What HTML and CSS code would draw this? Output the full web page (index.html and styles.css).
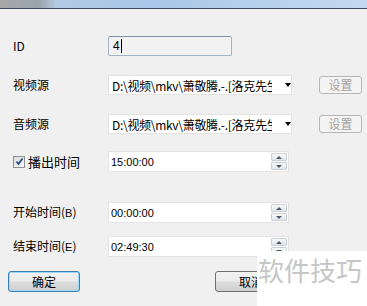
FILE: index.html
```html
<!DOCTYPE html>
<html lang="zh">
<head>
  <meta charset="UTF-8">
  <title>播出设置</title>
  <link rel="stylesheet" href="styles.css">
</head>
<body>
  <div class="titlebar"><div class="title-icon"></div></div>
  <div class="form">
    <div class="row row-id">
      <label class="lbl">ID</label>
      <div class="field field-id">4<span class="caret"></span></div>
    </div>
    <div class="row row-video">
      <label class="lbl">视频源</label>
      <div class="combo"><span class="combo-text">D:\视频\mkv\萧敬腾.-.[洛克先生</span><span class="arrow"></span></div>
      <button class="btn-set" disabled>设置</button>
    </div>
    <div class="row row-audio">
      <label class="lbl">音频源</label>
      <div class="combo"><span class="combo-text">D:\视频\mkv\萧敬腾.-.[洛克先生</span><span class="arrow"></span></div>
      <button class="btn-set" disabled>设置</button>
    </div>
    <div class="row row-play">
      <label class="lbl lbl-check"><span class="check">
        <svg width="9" height="9" viewBox="0 0 9 9"><path d="M1.5 4.5 L3.5 7 L7.5 1.5" fill="none" stroke="#2a4a8a" stroke-width="1.8"/></svg>
      </span>播出时间</label>
      <div class="spin"><span class="spin-text">15:00:00</span><span class="spin-btns"><span class="sb up"></span><span class="sb down"></span></span></div>
    </div>
    <div class="row row-start">
      <label class="lbl">开始时间(<span class="lat">B</span>)</label>
      <div class="spin"><span class="spin-text">00:00:00</span><span class="spin-btns"><span class="sb up"></span><span class="sb down"></span></span></div>
    </div>
    <div class="row row-end">
      <label class="lbl">结束时间(<span class="lat">E</span>)</label>
      <div class="spin"><span class="spin-text">02:49:30</span><span class="spin-btns"><span class="sb up"></span><span class="sb down"></span></span></div>
    </div>
    <div class="row row-buttons">
      <button class="btn btn-ok">确定</button>
      <button class="btn btn-cancel">取消</button>
    </div>
  </div>
  <div class="watermark">软件技巧</div>
</body>
</html>
```
FILE: styles.css
```css
* {
  margin: 0;
  padding: 0;
  box-sizing: border-box;
}

body {
  width: 367px;
  height: 306px;
  overflow: hidden;
  position: relative;
  background: #f0f0f0;
  font-family: "Noto Sans CJK SC", "Liberation Sans", sans-serif;
  font-size: 12px;
  color: #000;
}

.titlebar {
  height: 9px;
  background: linear-gradient(90deg, #b9cde4, #a9c6e8 40%, #c4d9f0);
  border-bottom: 1px solid #3d4b5b;
  position: relative;
}

.title-icon {
  width: 55px;
  height: 8px;
  background: linear-gradient(90deg, #a8a8a8, #9aa3ad 70%, #b3c6dc);
}

.form {
  padding-left: 13px;
}

.row {
  display: flex;
  align-items: center;
  height: 20px;
}

.row-id { margin-top: 27px; height: 20px; }
.row-video { margin-top: 19px; }
.row-audio { margin-top: 19px; }
.row-play { margin-top: 17px; height: 21px; }
.row-start { margin-top: 30px; height: 21px; }
.row-end { margin-top: 13px; height: 21px; }
.row-buttons { margin-top: 14px; height: 21px; padding-left: 0; margin-left: -5px; }

.lbl {
  width: 95px;
  line-height: 14px;
  white-space: nowrap;
}

.lat {
  font-family: "Liberation Sans", sans-serif;
  font-size: 11px;
}

.lbl-check {
  display: flex;
  align-items: center;
  gap: 3px;
  font-size: 13px;
}

.check {
  width: 12px;
  height: 12px;
  border: 1px solid #8f8f8f;
  background: linear-gradient(135deg, #dcdcdc, #fafafa);
  display: flex;
  align-items: center;
  justify-content: center;
}

.field-id {
  width: 124px;
  height: 20px;
  border: 1px solid #a4b3c4;
  border-top-color: #7e93a8;
  border-radius: 2px;
  background: #f2f2f2;
  font-family: "Liberation Sans", sans-serif;
  font-size: 12px;
  line-height: 18px;
  padding-left: 4px;
  display: flex;
  align-items: center;
}

.caret {
  width: 1px;
  height: 14px;
  background: #000;
  margin-left: 1px;
}

.combo {
  width: 184px;
  height: 20px;
  background: #fff;
  border: 1px solid #e3e3e3;
  display: flex;
  align-items: center;
  padding-left: 3px;
}

.combo-text {
  width: 162px;
  overflow: hidden;
  white-space: nowrap;
  font-size: 12px;
  letter-spacing: -0.3px;
}

.arrow {
  margin-left: 13px;
  width: 0;
  height: 0;
  border-left: 3.5px solid transparent;
  border-right: 3.5px solid transparent;
  border-top: 4px solid #000;
}

.btn-set {
  margin-left: 27px;
  width: 43px;
  height: 18px;
  border: 1px solid #b5b5b5;
  border-radius: 3px;
  background: #f4f4f4;
  color: #a3a3a3;
  font-family: "Noto Sans CJK SC", sans-serif;
  font-size: 12px;
  line-height: 16px;
}

.spin {
  width: 181px;
  height: 21px;
  background: #fff;
  border: 1px solid #e4e4e4;
  display: flex;
  align-items: center;
  padding-left: 2px;
}

.spin-text {
  flex: 1;
  font-family: "Liberation Sans", sans-serif;
  font-size: 11px;
}

.spin-btns {
  display: flex;
  flex-direction: column;
  gap: 1px;
  margin-right: 1px;
}

.sb {
  width: 16px;
  height: 8px;
  border: 1px solid #c8d0d8;
  border-radius: 1px;
  background: linear-gradient(#f8f8f8, #e2e6ea);
  position: relative;
}

.sb::after {
  content: "";
  position: absolute;
  left: 4px;
  width: 0;
  height: 0;
  border-left: 3px solid transparent;
  border-right: 3px solid transparent;
}

.sb.up::after {
  top: 2px;
  border-bottom: 3px solid #4b5a6a;
}

.sb.down::after {
  top: 2px;
  border-top: 3px solid #4b5a6a;
}

.btn {
  width: 72px;
  height: 21px;
  border-radius: 3px;
  font-family: "Noto Sans CJK SC", sans-serif;
  font-size: 12px;
  color: #000;
}

.btn-ok {
  border: 1px solid #3c7fb1;
  background: linear-gradient(#f2f2f2 0%, #ebebeb 48%, #dddddd 52%, #cfcfcf 100%);
  box-shadow: inset 0 0 0 1px #9ed8f8;
}

.btn-cancel {
  margin-left: 135px;
  border: 1px solid #707070;
  background: linear-gradient(#f2f2f2 0%, #ebebeb 48%, #dddddd 52%, #cfcfcf 100%);
}

.watermark {
  position: absolute;
  left: 257px;
  top: 251px;
  width: 110px;
  height: 55px;
  background: #fff;
  color: #c6c6c6;
  font-family: "Noto Sans CJK SC", sans-serif;
  font-size: 26px;
  line-height: 26px;
  padding-top: 6px;
  padding-left: 1px;
  white-space: nowrap;
}
```
